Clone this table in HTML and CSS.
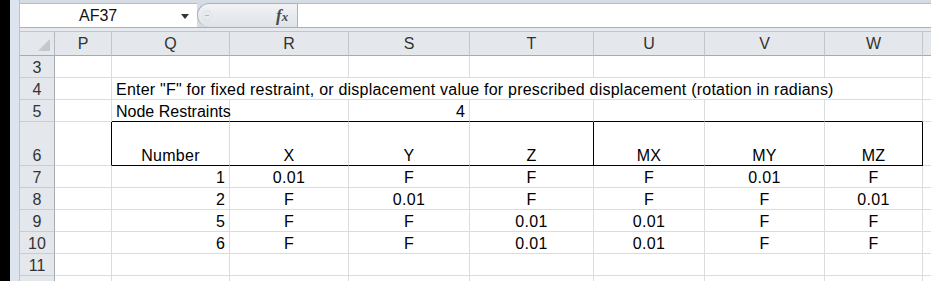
FILE: index.html
```html
<!DOCTYPE html>
<html>
  <head>
    <meta name="viewport" content="width=device-width,initial-scale=1.0">
    <title>Node Restraints</title>
    <link rel="stylesheet" href="styles.css">
  </head>
  <body>
    <div class="window">
      <div class="edge"></div>
      <div class="frame"></div>
      <div class="book">
        <div class="formula-bar">
          <div class="name-box">
            <span class="ref">AF37</span>
            <span class="caret"></span>
          </div>
          <div class="fx-panel">
            <span class="grip"></span>
            <span class="fx">f<i>x</i></span>
          </div>
          <div class="formula-input"></div>
        </div>
        <div class="bar-gap"></div>

        <div class="sheet">
          <!-- column headers -->
          <div class="corner"><span class="all"></span></div>
          <div class="ch">P</div>
          <div class="ch">Q</div>
          <div class="ch">R</div>
          <div class="ch">S</div>
          <div class="ch">T</div>
          <div class="ch">U</div>
          <div class="ch">V</div>
          <div class="ch">W</div>
          <div class="ch"></div>

          <!-- row 3 -->
          <div class="rh">3</div>
          <div class="c"></div><div class="c"></div><div class="c"></div><div class="c"></div>
          <div class="c"></div><div class="c"></div><div class="c"></div><div class="c"></div><div class="c"></div>

          <!-- row 4 -->
          <div class="rh">4</div>
          <div class="c"></div>
          <div class="c wide">Enter "F" for fixed restraint, or displacement value for prescribed displacement (rotation in radians)</div>
          <div class="c"></div>

          <!-- row 5 -->
          <div class="rh">5</div>
          <div class="c"></div>
          <div class="c top">Node Restraints</div>
          <div class="c top"></div>
          <div class="c top num">4</div>
          <div class="c top"></div>
          <div class="c top"></div>
          <div class="c top"></div>
          <div class="c top"></div>
          <div class="c"></div>

          <!-- row 6 -->
          <div class="rh">6</div>
          <div class="c box-left"></div>
          <div class="c head mid">Number</div>
          <div class="c head mid">X</div>
          <div class="c head mid">Y</div>
          <div class="c head mid split">Z</div>
          <div class="c head mid">MX</div>
          <div class="c head mid">MY</div>
          <div class="c head mid split">MZ</div>
          <div class="c"></div>

          <!-- rows 7-10 -->
          <div class="rh">7</div>
          <div class="c"></div>
          <div class="c num">1</div>
          <div class="c mid">0.01</div>
          <div class="c mid">F</div>
          <div class="c mid">F</div>
          <div class="c mid">F</div>
          <div class="c mid">0.01</div>
          <div class="c mid">F</div>
          <div class="c"></div>

          <div class="rh">8</div>
          <div class="c"></div>
          <div class="c num">2</div>
          <div class="c mid">F</div>
          <div class="c mid">0.01</div>
          <div class="c mid">F</div>
          <div class="c mid">F</div>
          <div class="c mid">F</div>
          <div class="c mid">0.01</div>
          <div class="c"></div>

          <div class="rh">9</div>
          <div class="c"></div>
          <div class="c num">5</div>
          <div class="c mid">F</div>
          <div class="c mid">F</div>
          <div class="c mid">0.01</div>
          <div class="c mid">0.01</div>
          <div class="c mid">F</div>
          <div class="c mid">F</div>
          <div class="c"></div>

          <div class="rh">10</div>
          <div class="c"></div>
          <div class="c num">6</div>
          <div class="c mid">F</div>
          <div class="c mid">F</div>
          <div class="c mid">0.01</div>
          <div class="c mid">0.01</div>
          <div class="c mid">F</div>
          <div class="c mid">F</div>
          <div class="c"></div>

          <!-- row 11 -->
          <div class="rh">11</div>
          <div class="c"></div><div class="c"></div><div class="c"></div><div class="c"></div>
          <div class="c"></div><div class="c"></div><div class="c"></div><div class="c"></div><div class="c"></div>

          <!-- row 12, only its top edge shows -->
          <div class="rh"></div>
          <div class="c"></div><div class="c"></div><div class="c"></div><div class="c"></div>
          <div class="c"></div><div class="c"></div><div class="c"></div><div class="c"></div><div class="c"></div>
        </div>
      </div>
    </div>
  </body>
</html>
```

FILE: styles.css
```css
body {
  margin: 0;
  font-family: "Liberation Sans", Arial, sans-serif;
  font-size: 16px;
  color: #000;
  background: #fff;
  overflow: hidden;
}
.window {
  display: flex;
  height: 281px;
  overflow: hidden;
}
.edge {
  width: 10px;
  background: #000;
}
.frame {
  width: 9px;
  background: #dde4ed;
  border-right: 1px solid #b9c3cf;
}
.book {
  flex: 1;
  display: flex;
  flex-direction: column;
  min-width: 0;
}

/* formula bar */
.formula-bar {
  flex-shrink: 0;
  display: flex;
  height: 28px;
  box-sizing: border-box;
  padding-top: 3px;
  background: #d6dce4;
  border-bottom: 1px solid #a7afba;
}
.name-box {
  width: 177px;
  position: relative;
  background: #fff;
  border-top: 1px solid #b5bdc8;
  display: flex;
  align-items: center;
}
.ref {
  padding-left: 59px;
  color: #111;
}
.caret {
  position: absolute;
  left: 161px;
  top: 10px;
  border-left: 4px solid transparent;
  border-right: 4px solid transparent;
  border-top: 5px solid #333;
}
.fx-panel {
  width: 100px;
  position: relative;
  box-sizing: border-box;
  background: linear-gradient(#f1f3f5, #dfe3e8);
  border: 1px solid #aab2bd;
  border-right: none;
  border-bottom: none;
  border-radius: 13px 0 0 13px;
}
.grip {
  position: absolute;
  left: 4px;
  top: 6px;
  width: 10px;
  height: 11px;
  border-radius: 50%;
  background: radial-gradient(circle, #e9ecef 40%, #d3d8de 100%);
}
.grip::after {
  content: "";
  position: absolute;
  left: 3px;
  top: 5px;
  width: 4px;
  height: 1px;
  background: #b3bac3;
}
.fx {
  position: absolute;
  left: 78px;
  top: 2px;
  font-family: "Liberation Serif", "Times New Roman", serif;
  font-style: italic;
  font-weight: bold;
  font-size: 17px;
  color: #4a4a4a;
}
.fx i {
  font-size: 13px;
}
.formula-input {
  flex: 1;
  background: #fff;
  border-top: 1px solid #b5bdc8;
  border-left: 1px solid #aab2bd;
}
.bar-gap {
  flex-shrink: 0;
  height: 3px;
  background: #e6e9ed;
  border-bottom: 1px solid #bfc5cc;
}

/* worksheet grid */
.sheet {
  flex-shrink: 0;
  display: grid;
  grid-template-columns: 35px 57px 118px 119px 121px 124px 111px 120px 98px 1fr;
  grid-template-rows: 24px 22px 22px 22px 44px 22px 22px 22px 22px 22px 22px;
}
.sheet > div {
  box-sizing: border-box;
  min-width: 0;
  white-space: nowrap;
}
.corner {
  position: relative;
  background: #e4e7eb;
  border-right: 1px solid #b4b9c0;
  border-bottom: 1px solid #a4abb4;
}
.all {
  position: absolute;
  right: 4px;
  bottom: 4px;
  border-left: 12px solid transparent;
  border-bottom: 12px solid #c4c8cd;
}
.ch {
  background: #e4e7eb;
  border-right: 1px solid #c3c7cd;
  border-bottom: 1px solid #a4abb4;
  color: #333;
  display: flex;
  align-items: center;
  justify-content: center;
  padding-top: 1px;
}
.rh {
  background: #e4e7eb;
  border-right: 1px solid #a4abb4;
  border-bottom: 1px solid #c9cdd2;
  color: #333;
  display: flex;
  align-items: flex-end;
  justify-content: center;
  line-height: 18px;
  padding-bottom: 0;
}
.c {
  border-right: 1px solid #dadcdd;
  border-bottom: 1px solid #dadcdd;
  display: flex;
  align-items: flex-end;
  padding: 0 4px 0;
  line-height: 18px;
}
.wide {
  grid-column: span 7;
  letter-spacing: 0.22px;
}
.num {
  justify-content: flex-end;
}
.mid {
  justify-content: center;
  letter-spacing: 0.3px;
}

/* outlined header block */
.top {
  border-bottom-color: #000;
}
.head {
  border-bottom-color: #000;
}
.box-left {
  border-right-color: #000;
}
.split {
  border-right-color: #000;
}
```
